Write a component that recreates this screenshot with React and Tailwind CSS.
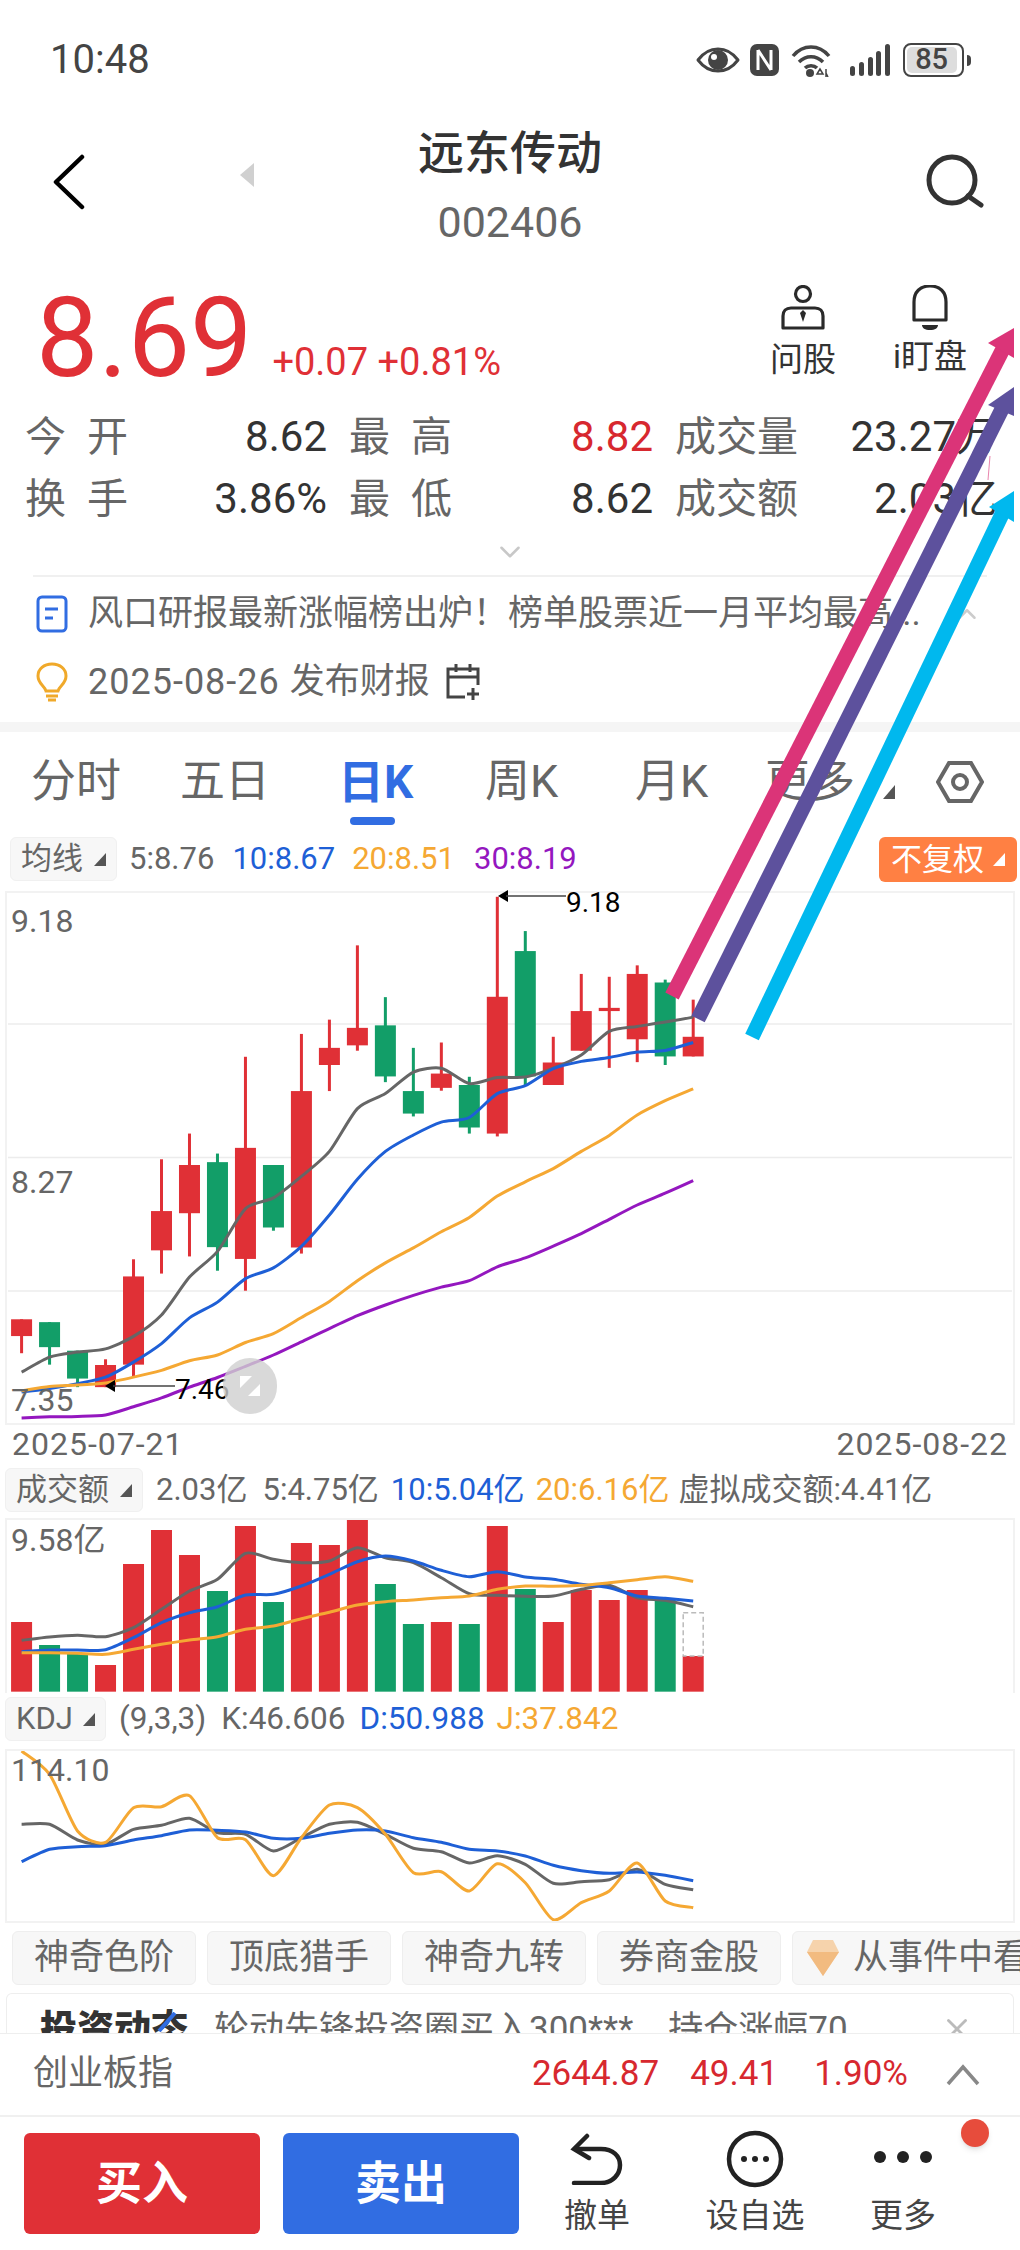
import React from 'react';
import { ChevronDown, ChevronUp, X } from 'lucide-react';

const RED = '#e03036';
const GREEN = '#129e68';

// all chart numbers are read off the zoomed crops, so the svgs keep those units
const candles = [
  ['r', 1230, 1277, 1230, 1325], ['g', 1238, 1308, 1238, 1357], ['g', 1318, 1396, 1318, 1420],
  ['r', 1358, 1420, 1342, 1420], ['r', 1110, 1357, 1062, 1390], ['r', 927, 1037, 782, 1102],
  ['r', 798, 933, 710, 1054], ['g', 790, 1028, 766, 1094], ['r', 750, 1061, 495, 1150],
  ['g', 798, 973, 798, 982], ['r', 591, 1029, 431, 1046], ['r', 470, 518, 391, 591],
  ['r', 414, 463, 183, 478], ['g', 407, 550, 328, 566], ['g', 591, 654, 470, 662],
  ['r', 542, 582, 455, 590], ['g', 574, 693, 551, 710], ['r', 327, 710, 47, 718],
  ['g', 199, 550, 143, 574], ['r', 511, 574, 439, 574], ['r', 367, 478, 263, 478],
  ['r', 358, 367, 271, 526], ['r', 263, 446, 239, 510], ['g', 287, 494, 279, 518],
  ['r', 439, 494, 335, 494],
];

const priceLines = [
  ['#666666', [1378, 1336, 1322, 1313, 1278, 1218, 1112, 1040, 920, 890, 830, 760, 640, 598, 538, 527, 570, 553, 552, 527, 490, 424, 410, 398, 384]],
  ['#1e5fd6', [1434, 1424, 1410, 1392, 1350, 1298, 1226, 1182, 1116, 1086, 1026, 938, 838, 760, 714, 678, 665, 598, 576, 528, 508, 497, 482, 477, 455]],
  ['#f5a833', [1430, 1418, 1414, 1408, 1392, 1373, 1346, 1330, 1295, 1270, 1225, 1180, 1122, 1072, 1030, 985, 945, 885, 845, 808, 760, 715, 658, 618, 585]],
  ['#9417bf', [1506, 1503, 1502, 1498, 1475, 1450, 1420, 1393, 1362, 1330, 1293, 1256, 1220, 1190, 1163, 1140, 1122, 1083, 1058, 1025, 990, 950, 910, 877, 842]],
];

const volumes = [
  ['r', 543], ['g', 612], ['g', 638], ['r', 672], ['r', 369], ['r', 267], ['r', 342], ['g', 450],
  ['r', 255], ['g', 483], ['r', 306], ['r', 312], ['r', 237], ['g', 429], ['g', 549], ['r', 543],
  ['g', 549], ['r', 255], ['g', 444], ['r', 543], ['r', 447], ['r', 477], ['r', 447], ['g', 477], ['r', 645],
];

const volumeLines = [
  ['#666666', [598, 588, 583, 587, 560, 505, 450, 415, 337, 355, 365, 360, 320, 350, 365, 410, 458, 463, 466, 465, 445, 433, 470, 478, 497]],
  ['#1e5fd6', [632, 627, 627, 626, 590, 545, 515, 497, 462, 460, 435, 400, 362, 345, 360, 388, 407, 392, 408, 415, 430, 440, 465, 472, 480]],
  ['#f5a833', [635, 635, 637, 640, 625, 610, 597, 587, 565, 555, 533, 514, 492, 482, 477, 470, 465, 445, 435, 436, 433, 425, 416, 407, 421]],
];

const kdjLines = [
  ['#666666', [1150, 1150, 1197, 1210, 1165, 1153, 1132, 1175, 1180, 1230, 1190, 1150, 1144, 1180, 1222, 1232, 1266, 1244, 1270, 1327, 1322, 1316, 1285, 1330, 1346]],
  ['#1e5fd6', [1262, 1225, 1217, 1214, 1197, 1184, 1167, 1168, 1173, 1192, 1192, 1177, 1167, 1170, 1190, 1204, 1225, 1230, 1245, 1273, 1289, 1297, 1293, 1303, 1319]],
  ['#f5a833', [930, 1000, 1170, 1204, 1100, 1097, 1064, 1190, 1196, 1304, 1190, 1092, 1100, 1180, 1295, 1292, 1350, 1268, 1325, 1436, 1385, 1350, 1266, 1380, 1400]],
];

const XS = 2.178;
const cx = (i) => (47 + i * 60.95) / XS;

// catmull-rom through the sampled points, the app's lines are rounded
const smoothPath = (ys, sy, oy) => {
  const pts = ys.map((y, i) => [cx(i), oy + y / sy]);
  let d = `M${pts[0][0].toFixed(1)} ${pts[0][1].toFixed(1)}`;
  for (let i = 0; i < pts.length - 1; i++) {
    const p0 = pts[Math.max(i - 1, 0)];
    const p1 = pts[i];
    const p2 = pts[i + 1];
    const p3 = pts[Math.min(i + 2, pts.length - 1)];
    const c1x = p1[0] + (p2[0] - p0[0]) / 8;
    const c1y = p1[1] + (p2[1] - p0[1]) / 8;
    const c2x = p2[0] - (p3[0] - p1[0]) / 8;
    const c2y = p2[1] - (p3[1] - p1[1]) / 8;
    d += ` C${c1x.toFixed(1)} ${c1y.toFixed(1)} ${c2x.toFixed(1)} ${c2y.toFixed(1)} ${p2[0].toFixed(1)} ${p2[1].toFixed(1)}`;
  }
  return d;
};

const DropButton = ({ label, className }) => (
  <div className={`h-[44px] flex items-center justify-between px-[10px] rounded-md bg-[#f7f7f7] border border-[#f0f0f0] text-[31px] text-[#666] ${className}`}>
    <span>{label}</span>
    <svg width="12" height="14" viewBox="0 0 12 14"><path d="M12 1v13H0z" fill="#555" /></svg>
  </div>
);

const Stat = ({ label, value, valueClass }) => {
  const parts = label.split(' ');
  return (
    <div className="flex justify-between items-center">
      <span className="flex justify-between min-w-[103px] text-[41px] text-[#666]">
        {parts.map((p) => <span key={p}>{p}</span>)}
      </span>
      <span className={`text-[42px] ${valueClass || 'text-[#333]'}`}>{value}</span>
    </div>
  );
};

const CandleChart = () => (
  <svg className="w-full h-full" viewBox="7 893 1006 530">
    {[1024, 1157.5, 1291].map((y) => <line key={y} x1="8" x2="1012" y1={y} y2={y} stroke="#ececec" strokeWidth="1.5" />)}
    {candles.map(([c, top, bottom, wickTop, wickBottom], i) => {
      const fill = c === 'r' ? RED : GREEN;
      return (
        <g key={i} fill={fill}>
          <rect x={cx(i) - 1.5} width="3" y={880 + wickTop / 2.8} height={(wickBottom - wickTop) / 2.8} />
          <rect x={cx(i) - 10.5} width="21" y={880 + top / 2.8} height={Math.max((bottom - top) / 2.8, 3)} />
        </g>
      );
    })}
    {priceLines.map(([color, ys]) => (
      <path key={color} d={smoothPath(ys, 2.8, 880)} fill="none" stroke={color} strokeWidth="3" />
    ))}
  </svg>
);

const VolumeChart = () => (
  <svg className="w-full h-full" viewBox="7 1519 1006 173">
    {volumes.map(([c, top], i) => (
      <rect key={i} x={cx(i) - 10.5} width="21" y={1440 + top / 3} height={(752 - top) / 3} fill={c === 'r' ? RED : GREEN} />
    ))}
    <rect x={cx(24) - 10} width="20" y={1440 + 515 / 3} height={130 / 3} fill="none" stroke="#bbb" strokeWidth="1.5" strokeDasharray="5 3" />
    {volumeLines.map(([color, ys]) => (
      <path key={color} d={smoothPath(ys, 3, 1440)} fill="none" stroke={color} strokeWidth="3" />
    ))}
  </svg>
);

const KdjChart = () => (
  <svg className="w-full h-full" viewBox="7 1750 1006 170">
    {kdjLines.map(([color, ys]) => (
      <path key={color} d={smoothPath(ys, 3, 1440)} fill="none" stroke={color} strokeWidth="3" />
    ))}
  </svg>
);

const Arrows = () => (
  <svg className="absolute left-0 top-0 pointer-events-none" width="1014" height="1100" viewBox="0 0 1014 1100">
    <path d="M672 996 L1003 349" stroke="#db3478" strokeWidth="15" fill="none" />
    <path d="M1014 328 L1014 358 L988 343 Z" fill="#db3478" />
    <path d="M698 1019 L1004 405" stroke="#5d519d" strokeWidth="15" fill="none" />
    <path d="M1014 387 L1014 416 L988 405 Z" fill="#5d519d" />
    <path d="M752 1037 L1004 510" stroke="#00b8ee" strokeWidth="15" fill="none" />
    <path d="M1014 491 L1014 522 L989 507 Z" fill="#00b8ee" />
    <path d="M990 456 L988 480" stroke="#db3478" strokeWidth="1" opacity="0.6" />
  </svg>
);

export default function App() {
  const font = { fontFamily: 'Roboto, "Noto Sans CJK SC", sans-serif' };
  return (
    <div style={font} className="relative w-[1020px] h-[2250px] overflow-hidden bg-white flex flex-col">
      {/* status bar */}
      <div className="h-[120px] shrink-0 flex items-center pl-[50px] text-[#444]">
        <span className="text-[40px]">10:48</span>
        <svg className="ml-[546px]" width="44" height="26" viewBox="0 0 44 26"><path d="M2 13C8 5 15 2 22 2s14 3 20 11c-6 8-13 11-20 11S8 21 2 13z" fill="none" stroke="#444" strokeWidth="3" strokeLinejoin="round" /><circle cx="22" cy="13" r="10" fill="#444" /><circle cx="18" cy="10" r="3" fill="#fff" /></svg>
        <svg className="ml-[10px]" width="29" height="32" viewBox="0 0 29 32"><rect width="29" height="32" rx="7" fill="#444" /><path d="M8 6v20M21 6v20M8 6l13 20" stroke="#fff" strokeWidth="3" fill="none" /></svg>
        <svg className="ml-[12px]" width="40" height="33" viewBox="0 0 40 33" fill="none" stroke="#444" strokeWidth="3.5"><path d="M2 12C12 0 28 0 38 12M8 18c7-7 17-7 24 0M14 24c3-3 9-3 12 0" /><circle cx="19" cy="29" r="4" fill="#444" stroke="none" /><path d="M29 25l-3 5h6zM35 25v8M37 33l-2-4" strokeWidth="1.5" /></svg>
        <svg className="ml-[19px]" width="40" height="32" viewBox="0 0 40 32" fill="#444"><rect x="0" y="22" width="5" height="10" rx="2.5" /><rect x="9" y="18" width="5" height="14" rx="2.5" /><rect x="18" y="13" width="5" height="19" rx="2.5" /><rect x="26" y="7" width="5" height="25" rx="2.5" /><rect x="35" y="0" width="5" height="32" rx="2.5" /></svg>
        <div className="ml-[13px] flex items-center">
          <div className="w-[61px] h-[34px] rounded-[8px] border-2 border-[#444] bg-white p-[2px]">
            <div className="w-[50px] h-full rounded-[5px] bg-[#ddd] flex items-center justify-center text-[29px] font-medium">85</div>
          </div>
          <div className="w-[4px] h-[11px] rounded-r bg-[#444] ml-[3px]" />
        </div>
      </div>

      {/* header */}
      <div className="relative h-[150px] shrink-0 flex flex-col items-center">
        <svg className="absolute left-[52px] top-[34px]" width="34" height="56" viewBox="0 0 34 56" fill="none" stroke="#000" strokeWidth="4.5" strokeLinecap="round"><path d="M30 3L4 28l26 25" strokeLinejoin="round" /></svg>
        <svg className="absolute left-[240px] top-[43px]" width="14" height="24" viewBox="0 0 14 24"><path d="M14 0v24L0 12z" fill="#d0d0d0" /></svg>
        <svg className="absolute left-[924px] top-[33px]" width="62" height="56" viewBox="0 0 62 56" fill="none" stroke="#333" strokeWidth="5"><circle cx="28" cy="27" r="23" /><path d="M44 43l13 9" strokeLinecap="round" /></svg>
        <div className="text-[46px] leading-[66px] font-medium text-[#333]">远东传动</div>
        <div className="text-[43px] leading-[50px] text-[#666] mt-[11px]">002406</div>
      </div>

      {/* price */}
      <div className="h-[134px] shrink-0 flex pl-[36px] pr-[50px]">
        <div className="text-[111px] leading-[136px] text-[#e03036]">8.69</div>
        <div className="text-[38px] text-[#e03036] ml-[20px] mt-[70px] leading-[44px]">+0.07 +0.81%</div>
        <div className="ml-auto flex gap-[54px] pt-[15px]">
          <div className="flex flex-col items-center w-[66px]">
            <svg width="46" height="46" viewBox="0 0 46 46" fill="none" stroke="#2a2a2a" strokeWidth="3.2"><circle cx="23" cy="9" r="7.5" /><path d="M3 43V31c0-5 3-8 8-8h24c5 0 8 3 8 8v12z" strokeLinejoin="round" /><path d="M23 25l-3 3 3 9 3-9z" fill="#2a2a2a" stroke="none" /></svg>
            <span className="text-[33px] leading-[44px] text-[#333] mt-[7px]">问股</span>
          </div>
          <div className="flex flex-col items-center w-[80px]">
            <svg width="36" height="46" viewBox="0 0 36 46" fill="none" stroke="#2a2a2a" strokeWidth="3.2"><path d="M2 35V17C2 7 8 1 18 1s16 6 16 16v18z" strokeLinejoin="round" /><path d="M10 40h16c0 3-3 5-8 5s-8-2-8-5z" fill="#2a2a2a" stroke="none" /></svg>
            <span className="text-[33px] leading-[44px] text-[#333] mt-[4px]">i盯盘</span>
          </div>
        </div>
      </div>

      {/* quote table */}
      <div className="h-[124px] shrink-0 pl-[25px] pt-[2px] leading-[62px] grid grid-cols-[302px_304px_323px] gap-x-[22px]">
        <Stat label="今 开" value="8.62" />
        <Stat label="最 高" value="8.82" valueClass="text-[#d7282f]" />
        <Stat label="成交量" value="23.27万" />
        <Stat label="换 手" value="3.86%" />
        <Stat label="最 低" value="8.62" />
        <Stat label="成交额" value="2.03亿" />
      </div>

      <div className="h-[47px] shrink-0 flex items-center justify-center text-[#c8c8c8]"><ChevronDown size={34} strokeWidth={1.8} /></div>
      <div className="h-[2px] shrink-0 mx-[33px] bg-[#f0f0f0]" />

      {/* news */}
      <div className="h-[74px] shrink-0 pl-[36px] pr-[38px] flex items-center text-[35px] text-[#666] whitespace-nowrap">
        <svg width="32" height="38" viewBox="0 0 32 38" fill="none" stroke="#316de2" strokeWidth="3"><rect x="2" y="2" width="28" height="34" rx="4" /><path d="M9 14h13M9 23h8" /></svg>
        <span className="ml-[20px]">风口研报最新涨幅榜出炉！榜单股票近一月平均最高...</span>
        <ChevronUp size={30} className="ml-auto text-[#ccc]" />
      </div>
      <div className="h-[62px] shrink-0 pl-[36px] flex items-center text-[35px] text-[#666]">
        <svg width="32" height="40" viewBox="0 0 32 40" fill="none" stroke="#f0a92a" strokeWidth="3"><path d="M10 29c-1-5-8-7-8-15C2 7 8 2 16 2s14 5 14 12c0 8-7 10-8 15z" /><path d="M10 34h12M12 38h8" /></svg>
        <span className="ml-[20px] text-[36px] tracking-[1px]">2025-08-26</span>
        <span className="ml-[10px]">发布财报</span>
        <svg className="ml-[15px]" width="36" height="38" viewBox="0 0 36 38" fill="none" stroke="#444" strokeWidth="3"><path d="M20 34H3V6h30v16M3 14h30M11 1v8M25 1v8M28 25v12M22 31h12" /></svg>
      </div>
      <div className="h-[10px] shrink-0 mt-[9px] bg-[#f5f5f5]" />

      {/* period tabs */}
      <div className="relative h-[100px] shrink-0 text-[45px] text-[#666]">
        <div className="flex items-center h-[100px] pl-[31px]">
          <span className="w-[149px]">分时</span>
          <span className="w-[158px]">五日</span>
          <span className="w-[147px] text-[46px] font-bold text-[#316de2]">日K</span>
          <span className="w-[150px]">周K</span>
          <span className="w-[130px]">月K</span>
          <span>更多</span>
          <svg className="ml-[28px] mt-[20px]" width="12" height="14" viewBox="0 0 12 14"><path d="M12 0v14H0z" fill="#555" /></svg>
          <svg className="ml-[41px]" width="48" height="42" viewBox="0 0 48 42" fill="none" stroke="#666" strokeWidth="4"><path d="M13 2h22l11 19-11 19H13L2 21z" /><circle cx="24" cy="21" r="7" /></svg>
        </div>
        <div className="absolute left-[350px] top-[85px] w-[45px] h-[8px] rounded bg-[#316de2]" />
      </div>

      {/* MA legend */}
      <div className="h-[59px] shrink-0 pt-[5px] pl-[10px] pr-[3px] flex items-start text-[31px] leading-[44px] whitespace-nowrap">
        <DropButton label="均线" className="w-[107px]" />
        <span className="ml-[12px] text-[#666]">5:8.76</span>
        <span className="ml-[18px] text-[#1e5fd6]">10:8.67</span>
        <span className="ml-[17px] text-[#f5a833]">20:8.51</span>
        <span className="ml-[19px] text-[#9417bf]">30:8.19</span>
        <div className="ml-auto w-[138px] h-[45px] rounded-md bg-[#ff8043] text-white flex items-center justify-between px-[12px]">
          <span>不复权</span>
          <svg width="12" height="13" viewBox="0 0 12 13"><path d="M12 0v13H0z" fill="#fff" /></svg>
        </div>
      </div>

      {/* price chart */}
      <div className="relative mx-[5px] h-[534px] border-2 border-[#f2f2f2] shrink-0">
        <CandleChart />
        <span className="absolute left-[4px] top-[8px] text-[32px] leading-[40px] text-[#666]">9.18</span>
        <span className="absolute left-[4px] top-[269px] text-[32px] leading-[40px] text-[#666]">8.27</span>
        <span className="absolute left-[4px] top-[487px] text-[32px] leading-[40px] text-[#666]">7.35</span>
        <div className="absolute left-[491px] top-[-3px] flex items-start text-black">
          <svg width="68" height="12" viewBox="0 0 68 12"><path d="M0 6l10-6v12z" fill="#000" /><path d="M8 6h60" stroke="#444" strokeWidth="1.5" /></svg>
          <span className="text-[28px] leading-[32px] -mt-[3px]">9.18</span>
        </div>
        <div className="absolute left-[98px] top-[487px] flex items-start text-black">
          <svg width="70" height="12" viewBox="0 0 70 12"><path d="M0 6l10-6v12z" fill="#000" /><path d="M8 6h62" stroke="#444" strokeWidth="1.5" /></svg>
          <span className="text-[28px] leading-[32px] -mt-[6px]">7.46</span>
        </div>
        <div className="absolute left-[216px] top-[465px] w-[54px] h-[56px] rounded-full bg-[#cfcfcf]/80 flex items-center justify-center">
          <svg width="24" height="24" viewBox="0 0 24 24"><path d="M2 2h12L2 14zM22 22H10l12-12z" fill="#fff" /></svg>
        </div>
      </div>

      <div className="h-[43px] shrink-0 pl-[12px] pr-[12px] pb-[6px] flex justify-between items-center text-[32px] tracking-[1px] text-[#666]">
        <span>2025-07-21</span>
        <span>2025-08-22</span>
      </div>

      {/* volume */}
      <div className="h-[50px] shrink-0 pl-[5px] flex items-start text-[31px] leading-[44px] whitespace-nowrap text-[#666]">
        <DropButton label="成交额" className="w-[138px]" />
        <span className="ml-[13px]">2.03亿</span>
        <span className="ml-[15px]">5:4.75亿</span>
        <span className="ml-[12px] text-[#1e5fd6]">10:5.04亿</span>
        <span className="ml-[11px] text-[#f5a833]">20:6.16亿</span>
        <span className="ml-[9px]">虚拟成交额:4.41亿</span>
      </div>
      <div className="relative mx-[5px] h-[175px] shrink-0 border-2 border-b-0 border-[#f2f2f2]">
        <VolumeChart />
        <span className="absolute left-[4px] top-[0px] text-[32px] leading-[40px] text-[#666]">9.58亿</span>
      </div>

      {/* kdj */}
      <div className="h-[56px] shrink-0 pl-[5px] pt-[4px] flex items-start text-[31.5px] leading-[44px] whitespace-nowrap text-[#666]">
        <DropButton label="KDJ" className="w-[101px]" />
        <span className="ml-[13px]">(9,3,3)</span>
        <span className="ml-[15px]">K:46.606</span>
        <span className="ml-[14px] text-[#1e5fd6]">D:50.988</span>
        <span className="ml-[12px] text-[#f5a833]">J:37.842</span>
      </div>
      <div className="relative mx-[5px] h-[174px] shrink-0 border-2 border-[#f2f2f2]">
        <KdjChart />
        <span className="absolute left-[4px] top-[-1px] text-[32px] leading-[40px] text-[#666]">114.10</span>
      </div>

      {/* feature pills */}
      <div className="h-[70px] shrink-0 pl-[12px] pt-[8px] flex gap-[11px] text-[35px] text-[#666] whitespace-nowrap overflow-hidden">
        {['神奇色阶', '顶底猎手', '神奇九转', '券商金股'].map((t) => (
          <div key={t} className="w-[184px] h-[54px] shrink-0 rounded-md bg-[#f7f7f7] border border-[#eee] flex items-center justify-center">{t}</div>
        ))}
        <div className="h-[54px] shrink-0 rounded-l-md bg-[#f7f7f7] border border-[#eee] flex items-center pl-[14px] pr-[20px]">
          <svg width="32" height="38" viewBox="0 0 32 38"><path d="M6 1h20l6 12-16 24L0 13z" fill="#f6d3ac" /><path d="M0 13h32L16 37z" fill="#f2bb80" /></svg>
          <span className="ml-[14px]">从事件中看机会</span>
        </div>
      </div>

      {/* news card, cut off by the fixed bar */}
      <div className="h-[40px] shrink-0 mx-[6px] rounded-t-md border border-b-0 border-[#eee] overflow-hidden flex items-start pl-[33px] pr-[39px] pt-[14px] text-[35px] leading-[44px] text-[#666] whitespace-nowrap">
        <span className="relative text-[37px] font-black text-[#333]">
          投资动态
          <svg className="absolute left-[117px] top-[4px]" width="20" height="20" viewBox="0 0 20 20"><path d="M18 1L2 19" stroke="#316de2" strokeWidth="4" /></svg>
        </span>
        <span className="ml-[26px]">轮动先锋投资圈买入300***，持仓涨幅70</span>
        <X size={34} className="ml-auto mt-[4px] text-[#bbb]" />
      </div>

      {/* index bar */}
      <div className="h-[82px] shrink-0 border-t border-[#eee] pl-[33px] pr-[40px] flex items-center text-[35px] whitespace-nowrap">
        <span className="text-[#666]">创业板指</span>
        <span className="ml-auto text-[#d7282f]">2644.87</span>
        <span className="ml-[31px] text-[#d7282f]">49.41</span>
        <span className="ml-[36px] text-[#d7282f]">1.90%</span>
        <svg className="ml-[38px]" width="34" height="22" viewBox="0 0 34 22" fill="none" stroke="#888" strokeWidth="3.5"><path d="M2 20L17 3l15 17" /></svg>
      </div>

      {/* trade bar */}
      <div className="relative flex-1 border-t-2 border-[#f0f0f0] pl-[24px] pt-[16px] flex items-start">
        <button className="w-[236px] h-[101px] rounded-md bg-[#e03036] text-white text-[46px] font-bold">买入</button>
        <button className="ml-[23px] w-[236px] h-[101px] rounded-md bg-[#316de2] text-white text-[46px] font-bold">卖出</button>
        <div className="flex flex-col items-center w-[80px] ml-[38px] text-[#444]">
          <svg width="56" height="52" viewBox="0 0 56 52" fill="none" stroke="#222" strokeWidth="4.5" strokeLinecap="round"><path d="M18 3L5 16l15 9" /><path d="M6 16h26c12 0 19 7 19 16s-7 18-19 18H5" /></svg>
          <span className="text-[33px] leading-[44px] mt-[9px]">撤单</span>
        </div>
        <div className="flex flex-col items-center w-[100px] ml-[68px] -mt-[3px] text-[#444]">
          <svg width="58" height="58" viewBox="0 0 58 58" fill="none"><circle cx="29" cy="29" r="26" stroke="#222" strokeWidth="4.5" /><circle cx="18" cy="29" r="3" fill="#222" /><circle cx="29" cy="29" r="3" fill="#222" /><circle cx="40" cy="29" r="3" fill="#222" /></svg>
          <span className="text-[33px] leading-[44px] mt-[6px]">设自选</span>
        </div>
        <div className="flex flex-col items-center w-[80px] ml-[58px] text-[#444]">
          <svg className="mt-[13px]" width="60" height="22" viewBox="0 0 60 22" fill="#222"><ellipse cx="7" cy="11" rx="6" ry="6" /><ellipse cx="30" cy="11" rx="6" ry="6" /><ellipse cx="53" cy="11" rx="6" ry="6" /></svg>
          <span className="text-[33px] leading-[44px] mt-[26px]">更多</span>
        </div>
        <div className="absolute left-[961px] top-[2px] w-[28px] h-[28px] rounded-full bg-[#e74c3c] shadow-md" />
      </div>

      <Arrows />
    </div>
  );
}
